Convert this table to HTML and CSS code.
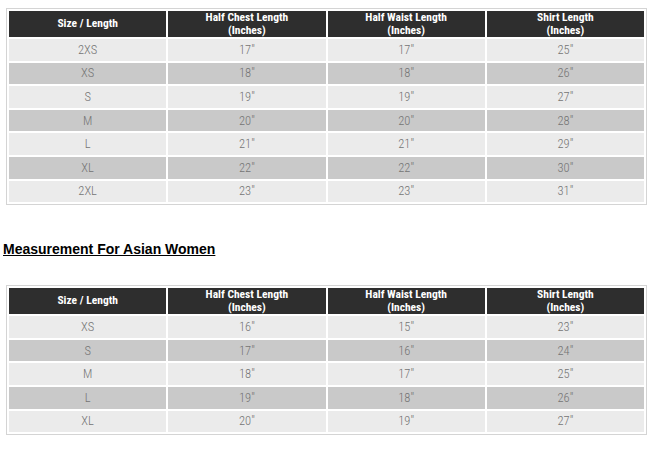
FILE: index.html
```html
<!DOCTYPE html>
<html>
<head>
<meta charset="utf-8">
<link rel="stylesheet" href="styles.css">
</head>
<body>
<div class="page">
  <table class="size-table first">
    <thead>
      <tr><th>Size / Length</th><th>Half Chest Length<br>(Inches)</th><th>Half Waist Length<br>(Inches)</th><th>Shirt Length<br>(Inches)</th></tr>
    </thead>
    <tbody>
      <tr class="light"><td>2XS</td><td>17″</td><td>17″</td><td>25″</td></tr>
      <tr class="dark"><td>XS</td><td>18″</td><td>18″</td><td>26″</td></tr>
      <tr class="light"><td>S</td><td>19″</td><td>19″</td><td>27″</td></tr>
      <tr class="dark"><td>M</td><td>20″</td><td>20″</td><td>28″</td></tr>
      <tr class="light"><td>L</td><td>21″</td><td>21″</td><td>29″</td></tr>
      <tr class="dark"><td>XL</td><td>22″</td><td>22″</td><td>30″</td></tr>
      <tr class="light"><td>2XL</td><td>23″</td><td>23″</td><td>31″</td></tr>
    </tbody>
  </table>

  <h2 class="section-title">Measurement For Asian Women</h2>

  <table class="size-table second">
    <thead>
      <tr><th>Size / Length</th><th>Half Chest Length<br>(Inches)</th><th>Half Waist Length<br>(Inches)</th><th>Shirt Length<br>(Inches)</th></tr>
    </thead>
    <tbody>
      <tr class="light"><td>XS</td><td>16″</td><td>15″</td><td>23″</td></tr>
      <tr class="dark"><td>S</td><td>17″</td><td>16″</td><td>24″</td></tr>
      <tr class="light"><td>M</td><td>18″</td><td>17″</td><td>25″</td></tr>
      <tr class="dark"><td>L</td><td>19″</td><td>18″</td><td>26″</td></tr>
      <tr class="light"><td>XL</td><td>20″</td><td>19″</td><td>27″</td></tr>
    </tbody>
  </table>
</div>
</body>
</html>
```
FILE: styles.css
```css
html, body {
  margin: 0;
  padding: 0;
  background: #ffffff;
}

.page {
  padding: 8px 16px 0 3px;
}

.size-table {
  margin-left: 3px;
  width: 641px;
  border: 1px solid #d4d4d4;
  border-collapse: separate;
  border-spacing: 2px;
  table-layout: fixed;
  font-family: "Roboto Condensed", "Liberation Sans Narrow", "Arial Narrow", Roboto, sans-serif;
}

.size-table th {
  background: #2e2e2e;
  color: #ffffff;
  font-weight: 700;
  font-size: 11.5px;
  line-height: 12.5px;
  height: 26px;
  padding: 0 0 1px 0;
  box-sizing: border-box;
  text-align: center;
  vertical-align: middle;
}

.size-table td {
  height: 21.6px;
  line-height: 14px;
  padding: 0;
  text-align: center;
  vertical-align: middle;
  font-size: 12.5px;
  font-weight: 300;
  color: #747474;
}

.size-table tr.light td {
  background: #ebebeb;
}

.size-table tr.dark td {
  background: #c9c9c9;
}

.section-title {
  margin: 36px 0 0 0;
  font-family: "Liberation Sans", Arial, sans-serif;
  font-size: 14px;
  line-height: 16px;
  font-weight: 700;
  color: #000000;
  text-decoration: underline;
}

.size-table.second {
  margin-top: 28px;
}
```
